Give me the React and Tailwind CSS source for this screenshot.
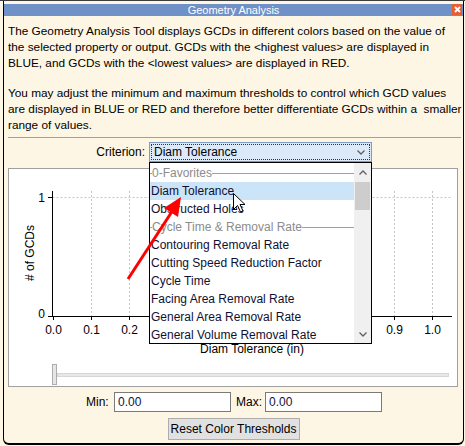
import React from "react";

const items = [
  { label: "0-Favorites", header: true },
  { label: "Diam Tolerance", active: true },
  { label: "Obstructed Holes" },
  { label: "Cycle Time & Removal Rate", header: true },
  { label: "Contouring Removal Rate" },
  { label: "Cutting Speed Reduction Factor" },
  { label: "Cycle Time" },
  { label: "Facing Area Removal Rate" },
  { label: "General Area Removal Rate" },
  { label: "General Volume Removal Rate" },
];

// labels 0.3 - 0.8 sit behind the open list, so only the visible ones are drawn
const ticks = ["0.0", "0.1", "0.2", "0.3", "0.4", "0.5", "0.6", "0.7", "0.8", "0.9", "1.0"];
const visible = [0, 1, 2, 9, 10];

function Chevron({ up }) {
  return (
    <svg width="8" height="5" viewBox="0 0 8 5">
      <polyline
        points={up ? "0.5,4.5 4,1 7.5,4.5" : "0.5,0.5 4,4 7.5,0.5"}
        fill="none"
        stroke="#606060"
        strokeWidth="1.3"
      />
    </svg>
  );
}

function GroupHeader({ label }) {
  return (
    <div className="h-[18px] flex items-center text-[#8c8c8c]">
      <div className="w-[2px] h-px bg-[#a0a0a0]" />
      <span className="whitespace-nowrap">{label}</span>
      <div className="flex-1 h-px bg-[#a0a0a0]" />
    </div>
  );
}

function Chart() {
  const xAt = (i) => Math.round(44 + i * 37.93) + 0.5;
  return (
    <svg width="448" height="190" className="block" fontFamily="Liberation Sans, Arial, sans-serif" fontSize="12">
      <line x1="43.5" x2="442.5" y1="28.5" y2="28.5" stroke="#c4c4c4" strokeDasharray="2 2" />
      {ticks.slice(1).map((t, i) => (
        <line key={t} x1={xAt(i + 1)} x2={xAt(i + 1)} y1="22" y2="147" stroke="#c4c4c4" strokeDasharray="2 2" />
      ))}
      <line x1="43.5" x2="43.5" y1="22" y2="148" stroke="#000" />
      <line x1="43" x2="443" y1="147.5" y2="147.5" stroke="#000" />
      <line x1="39" x2="43" y1="28.5" y2="28.5" stroke="#000" />
      <line x1="39" x2="43" y1="147.5" y2="147.5" stroke="#000" />
      {ticks.map((t, i) => (
        <line key={"t" + t} x1={xAt(i)} x2={xAt(i)} y1="147" y2="151" stroke="#000" />
      ))}
      <text x="36" y="28.5" textAnchor="end" dominantBaseline="central">1</text>
      <text x="36" y="145" textAnchor="end" dominantBaseline="central">0</text>
      {visible.map((i) => (
        <text key={"l" + i} x={xAt(i)} y="160.5" textAnchor="middle" dominantBaseline="central">
          {ticks[i]}
        </text>
      ))}
      <text x="21" y="84" textAnchor="middle" dominantBaseline="central" transform="rotate(-90 21 84)">
        # of GCDs
      </text>
      <text x="243" y="180" textAnchor="middle" dominantBaseline="central">
        Diam Tolerance (in)
      </text>
    </svg>
  );
}

export default function App() {
  return (
    <div className="relative w-[465px] h-[446px] overflow-hidden bg-[#fdf6e4] font-['Liberation_Sans',Arial,sans-serif] text-[12px] text-black">
      <div className="h-px bg-[#3c3c3c]" />
      <div className="ml-[3px] w-[461px] h-[444px] border-l border-r border-b-2 border-black rounded-b-[6px] pt-[3px] flex flex-col">
        {/* title bar */}
        <div className="relative h-[12px] bg-[#7090c8] flex items-center justify-center text-white text-[11px] leading-none">
          <span>Geometry Analysis</span>
          <div className="absolute right-[1px] top-0 w-[10px] h-[11px] bg-[#e55f35] flex items-center justify-center">
            <svg width="7" height="7" viewBox="0 0 7 7">
              <path d="M1 1 L6 6 M6 1 L1 6" stroke="#fff" strokeWidth="1.8" />
            </svg>
          </div>
        </div>

        {/* description */}
        <div className="pl-[4px] pt-[7px] leading-[16px] text-[11.8px] whitespace-nowrap">
          <p>
            The Geometry Analysis Tool displays GCDs in different colors based on the value of
            <br />
            the selected property or output. GCDs with the &lt;highest values&gt; are displayed in
            <br />
            BLUE, and GCDs with the &lt;lowest values&gt; are displayed in RED.
          </p>
          <p className="mt-[14px]">
            You may adjust the minimum and maximum thresholds to control which GCD values
            <br />
            are displayed in BLUE or RED and therefore better differentiate GCDs within a&nbsp; smaller
            <br />
            range of values.
          </p>
        </div>
        <div className="mt-[4px] ml-[4px] mr-[2px] h-px bg-[#a0a0a0]" />

        {/* criterion */}
        <div className="mt-[4px] flex items-center h-[20px]">
          <div className="w-[141px] text-right">Criterion:</div>
          <div className="ml-[4px] w-[223px] h-[20px] border border-[#7f9dc4] bg-[#dce9f8] p-[1px]">
            <div className="h-full border border-dotted border-[#333] flex items-center justify-between pl-[2px] pr-[4px]">
              <span>Diam Tolerance</span>
              <Chevron />
            </div>
          </div>
        </div>

        {/* chart panel */}
        <div className="mt-[6px] ml-[4px] w-[450px] h-[219px] border border-[#a0a0a0] bg-white flex flex-col">
          <Chart />
          <div className="mt-[5px] h-[21px] flex items-center pl-[43px] pr-[8px]">
            <div className="w-[5px] h-[21px] border border-[#acacac] bg-[#e6e6e6]" />
            <div className="flex-1 h-[4px] border border-[#d6d6d6] bg-[#e7e7e7]" />
          </div>
        </div>

        {/* min / max */}
        <div className="mt-[5px] h-[20px] flex items-center pl-[82px]">
          <span className="w-[28px]">Min:</span>
          <div className="w-[117px] h-[20px] border border-[#7a7a7a] bg-white flex items-center pl-[3px] text-[#101040]">0.00</div>
          <span className="w-[34px] pl-[5px]">Max:</span>
          <div className="w-[117px] h-[20px] border border-[#7a7a7a] bg-white flex items-center pl-[3px] text-[#101040]">0.00</div>
        </div>

        <div className="mt-[6px] mx-auto w-[132px] h-[22px] border border-[#adadad] bg-[#e1e1e1] flex items-center justify-center">
          Reset Color Thresholds
        </div>
      </div>

      {/* open dropdown list */}
      <div className="absolute left-[149px] top-[162px] w-[223px] h-[182px] border border-black bg-white flex">
        <div className="flex-1 pt-px text-[#101030]">
          {items.map((it) =>
            it.header ? (
              <GroupHeader key={it.label} label={it.label} />
            ) : (
              <div
                key={it.label}
                className={`h-[18px] flex items-center pl-px whitespace-nowrap ${it.active ? "bg-[#cce4f7]" : ""}`}
              >
                {it.label}
              </div>
            )
          )}
        </div>
        <div className="w-[17px] bg-[#f0f0f0] flex flex-col items-center">
          <div className="h-[18px] flex items-center justify-center">
            <Chevron up />
          </div>
          <div className="mt-px w-[15px] h-[28px] bg-[#cdcdcd]" />
          <div className="flex-1" />
          <div className="h-[18px] flex items-center justify-center">
            <Chevron />
          </div>
        </div>
      </div>

      {/* annotation arrow and mouse cursor */}
      <svg className="absolute left-0 top-0 pointer-events-none" width="465" height="446">
        <line x1="128" y1="279" x2="173" y2="210" stroke="#ff0000" strokeWidth="3" />
        <polygon points="181,197 164,208 178,217" fill="#ff0000" />
        <path
          d="M233.5 193.5 L233.5 209.5 L237.5 205.5 L240.5 212 L243 211 L240 204.5 L245 204.5 Z"
          fill="#fff"
          stroke="#000"
          strokeWidth="1"
        />
      </svg>
    </div>
  );
}
